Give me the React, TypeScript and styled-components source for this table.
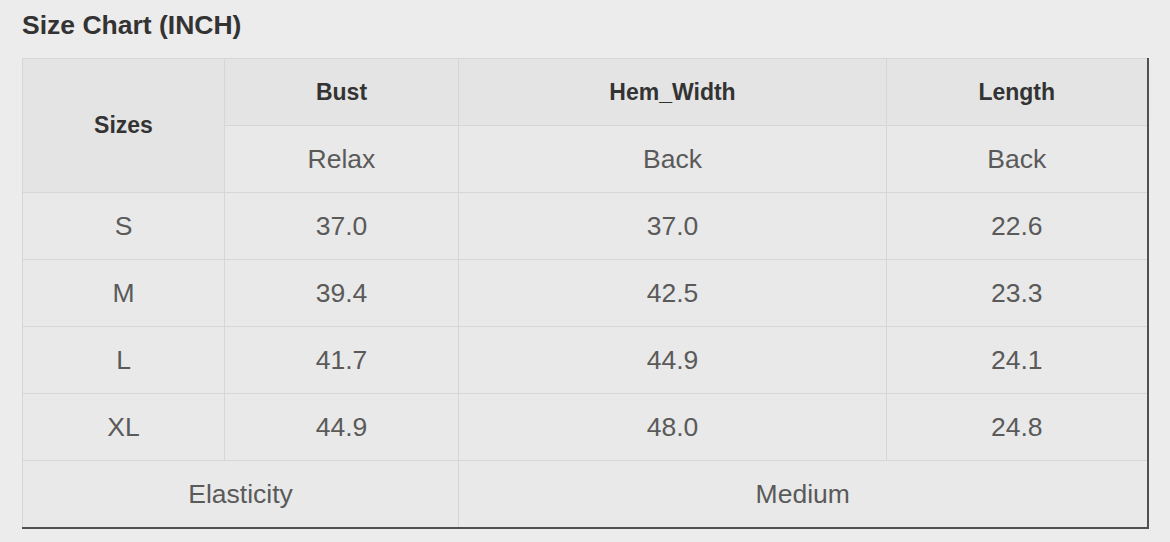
import styled, { createGlobalStyle } from 'styled-components';

const GlobalStyle = createGlobalStyle`
  html, body {
    margin: 0;
    padding: 0;
    background: #ececec;
    font-family: "Liberation Sans", Arial, sans-serif;
  }
`;

const Page = styled.div`
  padding: 10px 0 0 22px;
  width: 1125px;
`;

const Title = styled.h2`
  margin: 0 0 18px 0;
  font-size: 26.5px;
  line-height: 30px;
  font-weight: 700;
  color: #333;
`;

const Table = styled.table`
  width: 1125px;
  border-collapse: collapse;
  table-layout: fixed;
  background: #e9e9e9;
  border-top: 1px solid #d0d0d0;
  border-left: 1px solid #d0d0d0;
  border-right: 2px solid #505050;
  border-bottom: 2px solid #505050;
`;

const Cell = styled.td<{ $head?: boolean }>`
  height: 66px;
  padding: 0;
  text-align: center;
  vertical-align: middle;
  border: 1px solid #d6d6d6;
  background: ${(p) => (p.$head ? '#e4e4e4' : '#e9e9e9')};
  color: ${(p) => (p.$head ? '#333' : '#5a5a5a')};
  font-size: ${(p) => (p.$head ? '23px' : '26.5px')};
  font-weight: ${(p) => (p.$head ? 700 : 400)};
`;

const rows = [
  ['S', '37.0', '37.0', '22.6'],
  ['M', '39.4', '42.5', '23.3'],
  ['L', '41.7', '44.9', '24.1'],
  ['XL', '44.9', '48.0', '24.8'],
];

export default function App() {
  return (
    <>
      <GlobalStyle />
      <Page>
        <Title>Size Chart (INCH)</Title>
        <Table>
          <colgroup>
            <col style={{ width: 202 }} />
            <col style={{ width: 234 }} />
            <col style={{ width: 428 }} />
            <col style={{ width: 261 }} />
          </colgroup>
          <tbody>
            <tr>
              <Cell $head rowSpan={2}>Sizes</Cell>
              <Cell $head>Bust</Cell>
              <Cell $head>Hem_Width</Cell>
              <Cell $head>Length</Cell>
            </tr>
            <tr>
              <Cell>Relax</Cell>
              <Cell>Back</Cell>
              <Cell>Back</Cell>
            </tr>
            {rows.map((r) => (
              <tr key={r[0]}>
                {r.map((v, i) => (
                  <Cell key={i}>{v}</Cell>
                ))}
              </tr>
            ))}
            <tr>
              <Cell colSpan={2}>Elasticity</Cell>
              <Cell colSpan={2}>Medium</Cell>
            </tr>
          </tbody>
        </Table>
      </Page>
    </>
  );
}
